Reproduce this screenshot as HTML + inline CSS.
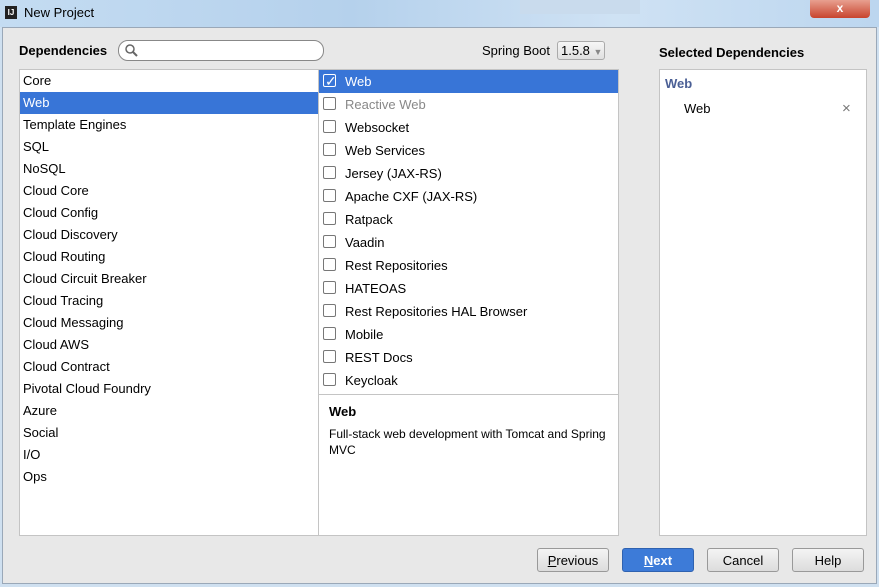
<!DOCTYPE html><html><head><style>
body{margin:0;width:879px;height:587px;overflow:hidden;font-family:"Liberation Sans",sans-serif;font-size:13px;color:#000;background:#cfe0f0;position:relative}
.title{position:absolute;left:0;top:0;width:879px;height:27px;background:linear-gradient(90deg,#c4dcf2,#b5d1ec 40%,#cfe2f4 70%,#bcd6ef)}
.main{position:absolute;left:2px;top:27px;width:875px;height:557px;background:#e8e8e8;border:1px solid #9aa8b8;box-sizing:border-box}
.abs{position:absolute}
.list{position:absolute;background:#fff;border:1px solid #c4c4c4;box-sizing:border-box}
.r{height:22px;line-height:22px;padding-left:3px}
.sel{background:#3875d7;color:#fff}
.m{height:23px;line-height:23px;padding-left:26px;position:relative}
.m:before{content:"";position:absolute;left:4px;top:4px;width:13px;height:13px;border:1px solid #777;background:#fff;box-sizing:border-box;border-radius:2px}
.m.sel:before{border-color:#fff;background:#3875d7}
.btn{position:absolute;top:548px;width:70px;height:24px;border:1px solid #999;border-radius:3px;background:linear-gradient(#f4f4f4,#dcdcdc);text-align:center;line-height:23px;box-sizing:border-box}
</style></head><body>
<div class="title"></div>
<div class="abs" style="left:5px;top:6px;width:12px;height:13px;background:#222;color:#fff;font-size:8px;font-weight:bold;line-height:13px;text-align:center">IJ</div>
<div class="abs" style="left:24px;top:5px;font-size:13px">New Project</div>
<div class="abs" style="left:520px;top:0;width:120px;height:14px;background:#c9dbed"></div>
<div class="abs" style="left:810px;top:0;width:60px;height:18px;background:linear-gradient(#e8a090,#c8442e);border-radius:0 0 4px 4px;color:#fff;font-weight:bold;text-align:center;line-height:16px;font-size:12px">x</div>
<div class="main"></div>
<div class="abs" style="left:19px;top:43px;font-weight:bold">Dependencies</div>
<div class="abs" style="left:118px;top:40px;width:206px;height:21px;border:1px solid #888;border-radius:10px;background:#fff;box-sizing:border-box"><svg width="16" height="16" style="position:absolute;left:5px;top:2px"><circle cx="6" cy="6" r="4" fill="none" stroke="#666" stroke-width="1.5"/><path d="M9 9l4 4" stroke="#666" stroke-width="2"/></svg></div>
<div class="abs" style="left:482px;top:43px">Spring Boot</div>
<div class="abs" style="left:557px;top:41px;width:48px;height:19px;border:1px solid #aaa;border-radius:3px;background:linear-gradient(#f6f6f6,#e0e0e0);box-sizing:border-box;line-height:17px;padding-left:3px">1.5.8 <span style="color:#888;font-size:9px">▼</span></div>
<div class="abs" style="left:659px;top:45px;font-weight:bold">Selected Dependencies</div>
<div class="list" style="left:19px;top:69px;width:300px;height:467px;padding-top:0">
<div class="r">Core</div><div class="r sel">Web</div><div class="r">Template Engines</div><div class="r">SQL</div><div class="r">NoSQL</div><div class="r">Cloud Core</div><div class="r">Cloud Config</div><div class="r">Cloud Discovery</div><div class="r">Cloud Routing</div><div class="r">Cloud Circuit Breaker</div><div class="r">Cloud Tracing</div><div class="r">Cloud Messaging</div><div class="r">Cloud AWS</div><div class="r">Cloud Contract</div><div class="r">Pivotal Cloud Foundry</div><div class="r">Azure</div><div class="r">Social</div><div class="r">I/O</div><div class="r">Ops</div></div>
<div class="list" style="left:318px;top:69px;width:301px;height:326px;padding-top:0">
<div class="m sel" style="color:#fff">Web<span style="position:absolute;left:6px;top:0;font-size:14px">✓</span></div>
<div class="m" style="color:#888">Reactive Web</div>
<div class="m">Websocket</div><div class="m">Web Services</div><div class="m">Jersey (JAX-RS)</div><div class="m">Apache CXF (JAX-RS)</div><div class="m">Ratpack</div><div class="m">Vaadin</div><div class="m">Rest Repositories</div><div class="m">HATEOAS</div><div class="m">Rest Repositories HAL Browser</div><div class="m">Mobile</div><div class="m">REST Docs</div><div class="m">Keycloak</div></div>
<div class="list" style="left:318px;top:394px;width:301px;height:142px;padding:9px 10px;font-size:12px;line-height:16px">
<div style="font-weight:bold;font-size:13px;margin-bottom:6px">Web</div>Full-stack web development with Tomcat and Spring MVC</div>
<div class="list" style="left:659px;top:69px;width:208px;height:467px">
<div class="abs" style="left:5px;top:6px;font-weight:bold;color:#4a5f95">Web</div>
<div class="abs" style="left:24px;top:31px">Web</div>
<div class="abs" style="left:182px;top:30px;color:#777;font-size:15px">×</div></div>
<div class="btn" style="left:537px;width:72px"><u>P</u>revious</div>
<div class="btn" style="left:622px;width:72px;background:#3d7bd8;border-color:#2f62b0;color:#fff;font-weight:bold"><u>N</u>ext</div>
<div class="btn" style="left:707px;width:72px">Cancel</div>
<div class="btn" style="left:792px;width:72px">Help</div>
</body></html>
